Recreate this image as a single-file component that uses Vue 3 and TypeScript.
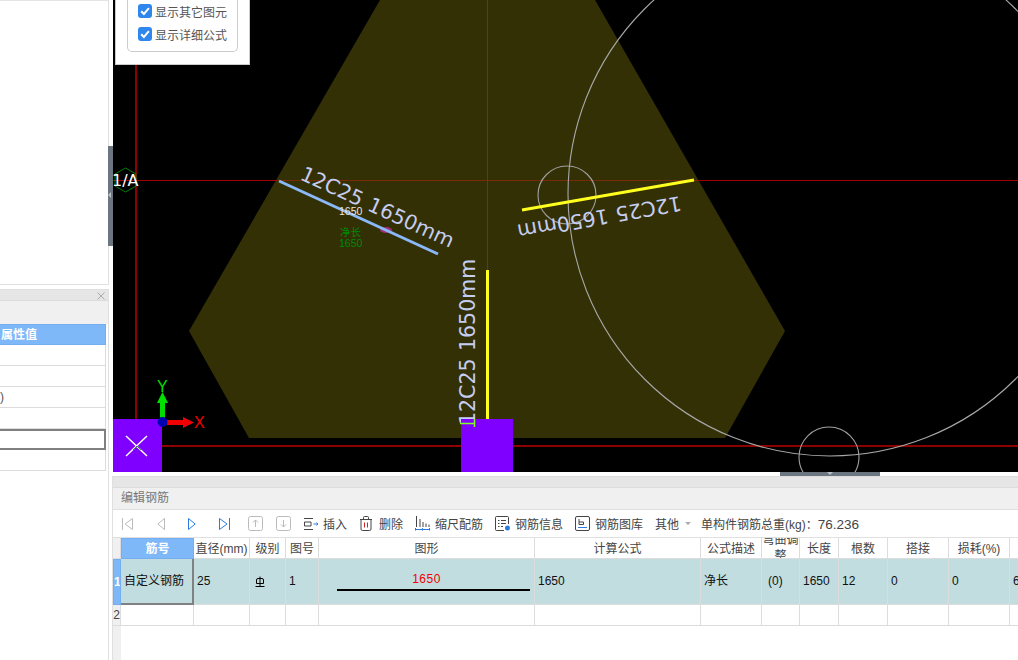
<script setup lang="ts">
interface Column {
  title: string
  width: number
}

const columns: Column[] = [
  { title: '筋号', width: 73 },
  { title: '直径(mm)', width: 56 },
  { title: '级别', width: 36 },
  { title: '图号', width: 33 },
  { title: '图形', width: 216 },
  { title: '计算公式', width: 166 },
  { title: '公式描述', width: 61 },
  { title: '弯曲调整', width: 38 },
  { title: '长度', width: 39 },
  { title: '根数', width: 49 },
  { title: '搭接', width: 61 },
  { title: '损耗(%)', width: 61 },
  { title: '', width: 40 },
]

const gridTemplate = '8px ' + columns.map((c) => c.width + 'px').join(' ')

const rebar = ['自定义钢筋', '25', '', '1', '', '1650', '净长', '(0)', '1650', '12', '0', '0', '6']
const sideRows = ['', '', ')', '', '', '']
const viewOptions = ['显示其它图元', '显示详细公式']
</script>

<template>
  <div class="page">
    <aside class="side">
      <div class="side-top">
        <span class="splitter-v"><i></i></span>
      </div>
      <div class="side-props">
        <div class="props-title">
          <svg class="close" width="8" height="8" viewBox="0 0 8 8" stroke="#aaa">
            <path d="M.5 .5L7.5 7.5M7.5 .5L.5 7.5" />
          </svg>
        </div>
        <div class="props-tabs"></div>
        <div class="props-head">属性值</div>
        <div
          v-for="(text, i) in sideRows"
          :key="i"
          class="props-row"
          :class="{ current: i === 4 }"
        >{{ text }}</div>
      </div>
    </aside>

    <main class="work">
      <div class="canvas">
        <svg class="drawing" viewBox="113 0 905 472" width="905" height="472">
          <rect x="113" y="0" width="905" height="472" fill="#000" />
          <polygon points="380,0 595,0 785,331 725,438 249,438 189,331" fill="#333006" />

          <line x1="136" y1="0" x2="136" y2="420" stroke="#8b0000" stroke-width="2" />
          <line x1="162" y1="446" x2="1018" y2="446" stroke="#8b0000" stroke-width="2" />
          <line x1="113" y1="180.5" x2="278" y2="180.5" stroke="#a00000" />
          <line x1="278" y1="180.5" x2="697" y2="180.5" stroke="#7a2a04" />
          <line x1="697" y1="180.5" x2="1018" y2="180.5" stroke="#a00000" />
          <line x1="487.5" y1="0" x2="487.5" y2="270" stroke="#7a3208" />

          <circle cx="830" cy="194" r="262" fill="none" stroke="#a8a8a8" stroke-width="1.1" />
          <circle cx="567" cy="195" r="29" fill="none" stroke="#a0a0a0" stroke-width="1.1" />
          <circle cx="829" cy="457" r="30" fill="none" stroke="#a0a0a0" stroke-width="1.1" />

          <polygon points="125.5,168 136,174 136,186 125.5,192 115,186 115,174" fill="none" stroke="#008000" />
          <text x="112" y="186" class="axis-name">1/A</text>

          <ellipse cx="386" cy="230" rx="6" ry="3" fill="#a0307a" />
          <line x1="279" y1="181" x2="438" y2="254" stroke="#8ab8f8" stroke-width="3" />
          <line x1="522" y1="210" x2="694" y2="180" stroke="#ffff20" stroke-width="3" />
          <line x1="487.5" y1="270" x2="487.5" y2="420" stroke="#ffff20" stroke-width="3" />

          <text x="299" y="179" class="rebar-label" transform="rotate(24.6 299 179)">12C25 1650mm</text>
          <text x="680" y="196" class="rebar-label" transform="rotate(170 680 196)">12C25 1650mm</text>
          <text x="475" y="425" class="rebar-label" transform="rotate(-90 475 425)">12C25 1650mm</text>

          <text x="339" y="215" class="note white">1650</text>
          <text x="340" y="236" class="note green">净长</text>
          <text x="339" y="247" class="note green">1650</text>

          <rect x="113" y="419" width="49" height="53" fill="#8000ff" />
          <rect x="461" y="419" width="52" height="53" fill="#8000ff" />
          <path d="M460 423.5H475M474.5 419V427" fill="none" stroke="#80ff20" stroke-width="1.5" />
          <path d="M126 436L147 456M147 436L126 456" stroke="#fff" stroke-width="1.5" />
          <path d="M133 450L137 446L141 450" fill="none" stroke="#2f9a2f" />

          <rect x="160" y="402" width="5" height="18" fill="#00e000" />
          <polygon points="162.5,392 168,403 157,403" fill="#00e000" />
          <rect x="167" y="420" width="17" height="5" fill="#f00000" />
          <polygon points="183,417 194,422.5 183,428" fill="#f00000" />
          <circle cx="162.5" cy="422" r="5" fill="#0000b0" />
          <text x="157" y="392" class="axis-letter" fill="#00e000">Y</text>
          <text x="194" y="428" class="axis-letter" fill="#f00000">X</text>
        </svg>

        <div class="view-options">
          <div class="options-box">
            <div v-for="label in viewOptions" :key="label" class="option">
              <svg width="14" height="14" viewBox="0 0 14 14">
                <rect width="14" height="14" rx="3" fill="#2f86ec" />
                <path d="M3.2 7.2L5.9 10L10.9 4.2" fill="none" stroke="#fff" stroke-width="2" />
              </svg>
              {{ label }}
            </div>
          </div>
        </div>
      </div>

      <div class="gap-row"><span class="splitter-h"><i></i></span></div>

      <section class="rebar-panel">
        <div class="panel-strip"></div>
        <div class="panel-title">编辑钢筋</div>

        <div class="toolbar">
          <svg class="ico first" width="11" height="14" viewBox="0 0 11 14" fill="none" stroke="#bbb">
            <path d="M.5 1V13M10.5 1.5L3 7L10.5 12.5Z" />
          </svg>
          <svg class="ico prev" width="8" height="14" viewBox="0 0 8 14" fill="none" stroke="#bbb">
            <path d="M7.5 1.5L.8 7L7.5 12.5Z" />
          </svg>
          <svg class="ico next" width="8" height="14" viewBox="0 0 8 14" fill="none" stroke="#2a7ae0">
            <path d="M.5 1.5L7.2 7L.5 12.5Z" />
          </svg>
          <svg class="ico last" width="11" height="14" viewBox="0 0 11 14" fill="none" stroke="#2a7ae0">
            <path d="M10.5 1V13M.5 1.5L8 7L.5 12.5Z" />
          </svg>
          <svg class="ico up" width="15" height="15" viewBox="0 0 15 15" fill="none" stroke="#bbb">
            <rect x=".5" y=".5" width="14" height="14" rx="2" />
            <path d="M7.5 11V4M5 6.5L7.5 4L10 6.5" />
          </svg>
          <svg class="ico down" width="15" height="15" viewBox="0 0 15 15" fill="none" stroke="#bbb">
            <rect x=".5" y=".5" width="14" height="14" rx="2" />
            <path d="M7.5 4V11M5 8.5L7.5 11L10 8.5" />
          </svg>

          <button class="tool insert">
            <svg width="16" height="14" viewBox="0 0 16 14" fill="none" stroke="#444">
              <path d="M1 1.5H10M1 12.5H10M1.5 5H8V9H1.5Z" />
              <path d="M10.5 7H15M13.5 5.5L15 7L13.5 8.5" stroke="#2a7ae0" />
            </svg>
            插入
          </button>
          <button class="tool del">
            <svg width="14" height="15" viewBox="0 0 14 15" fill="none" stroke="#444">
              <path d="M1 3.5H13M4.5 3.5V1.5A1 1 0 0 1 5.5 .5H8.5A1 1 0 0 1 9.5 1.5V3.5M2 3.5V13A1.5 1.5 0 0 0 3.5 14.5H10.5A1.5 1.5 0 0 0 12 13V3.5" />
              <path d="M5.5 6.5V11.5M8.5 6.5V11.5" stroke="#d02020" />
            </svg>
            删除
          </button>
          <button class="tool ruler">
            <svg width="15" height="15" viewBox="0 0 15 15" fill="none" stroke="#444">
              <path d="M1.5 0V11M5 3V11M8 6V11M11 7.5V11M14 8.5V11" />
              <path d="M.5 12V14.5M.5 13.5H14.5M14.5 12V14.5M7.5 12V14.5" stroke="#2a7ae0" />
            </svg>
            缩尺配筋
          </button>
          <button class="tool info">
            <svg width="16" height="15" viewBox="0 0 16 15" fill="none" stroke="#444">
              <path d="M9 14.5H1.5A1 1 0 0 1 .5 13.5V1.5A1 1 0 0 1 1.5 .5H12.5A1 1 0 0 1 13.5 1.5V8" />
              <path d="M3 4.5H4.5M6 4.5H11M3 7.5H4.5M6 7.5H11M3 10.5H4.5M6 10.5H8" />
              <circle cx="12.5" cy="12" r="2.5" fill="#2a7ae0" stroke="none" />
            </svg>
            钢筋信息
          </button>
          <button class="tool lib">
            <svg width="15" height="15" viewBox="0 0 15 15" fill="none" stroke="#444">
              <rect x=".5" y=".5" width="14" height="14" rx="1.5" />
              <path d="M4 3V8.5H8.5V6H4" />
              <path d="M3 11.5H12" stroke="#2a7ae0" />
            </svg>
            钢筋图库
          </button>
          <span class="more">其他</span>
          <span class="caret"></span>
          <span class="total">单构件钢筋总重(kg)：<b>76.236</b></span>
        </div>

        <div class="grid" :style="{ gridTemplateColumns: gridTemplate }">
          <div class="corner"></div>
          <div
            v-for="(col, i) in columns"
            :key="'h' + i"
            class="head"
            :class="{ active: i === 0, wrap: col.title === '弯曲调整' }"
          >{{ col.title }}</div>

          <div class="row-no active">1</div>
          <div
            v-for="(text, i) in rebar"
            :key="'r' + i"
            class="cell"
            :class="{ selected: i === 0, shape: i === 4, bend: i === 7 }"
          >
            <template v-if="i === 2">
              <svg class="grade" width="10" height="11" viewBox="0 0 10 11" fill="none" stroke="#000">
                <path d="M1.5 4Q1.5 2.5 3 2.5H7Q8.5 2.5 8.5 4V7.5H1.5ZM5 .5V10M.5 10.5H9.5" />
              </svg>
            </template>
            <template v-else-if="i === 4">
              <span class="shape-dim">1650</span>
              <span class="shape-bar"></span>
            </template>
            <template v-else>{{ text }}</template>
          </div>

          <div class="row-no">2</div>
          <div v-for="(col, i) in columns" :key="'e' + i" class="cell empty"></div>
        </div>
        <div class="no-rest"></div>
      </section>
    </main>
  </div>
</template>

<style>
html,
body {
  margin: 0;
  background: #fff;
  overflow: hidden;
}
</style>

<style scoped>
.page {
  display: flex;
  width: 1018px;
  height: 660px;
  overflow: hidden;
  background: #fff;
  font-family: "Liberation Sans", "Noto Sans CJK SC", sans-serif;
  font-size: 12px;
  color: #333;
}

.side {
  width: 113px;
  flex: none;
  display: flex;
  flex-direction: column;
  gap: 4px;
}
.side-top {
  height: 285px;
  box-sizing: border-box;
  width: 109px;
  border-top: 1px solid #e4e4e4;
  border-right: 1px solid #e0e0e0;
  border-bottom: 1px solid #e0e0e0;
  position: relative;
}
.splitter-v {
  position: absolute;
  left: 108px;
  top: 145px;
  width: 5px;
  height: 100px;
  background: #6c7680;
}
.splitter-v i {
  position: absolute;
  left: 0;
  top: 46px;
  border: 3px solid transparent;
  border-right-color: #b8bec4;
  border-left-width: 0;
}
.side-props {
  flex: 1;
  width: 109px;
  box-sizing: border-box;
  border-right: 1px solid #e0e0e0;
  overflow: hidden;
}
.props-title {
  height: 10px;
  background: #e6e6e6;
  border-top: 1px solid #e0e0e0;
  border-bottom: 1px solid #dcdcdc;
  position: relative;
}
.close {
  position: absolute;
  right: 3px;
  top: 2px;
}
.props-tabs {
  height: 23px;
  background: #f0f0f0;
}
.props-head,
.props-row {
  width: 106px;
  box-sizing: border-box;
  height: 21px;
  line-height: 20px;
  border-right: 1px solid #dcdcdc;
  border-bottom: 1px solid #dcdcdc;
}
.props-head {
  background: #7fb8f8;
  border: 1px solid #74aef0;
  border-left: 0;
  color: #fff;
  font-weight: 700;
  font-size: 12px;
  padding-left: 1px;
}
.props-row {
  font-size: 12px;
  color: #555;
}
.props-row.current {
  border: 2px solid #808080;
  border-left: 0;
}

.work {
  flex: 1;
  min-width: 0;
  display: flex;
  flex-direction: column;
}
.canvas {
  position: relative;
  height: 472px;
  flex: none;
}
.drawing {
  display: block;
}
.rebar-label {
  font-family: "DejaVu Sans", sans-serif;
  font-size: 20.5px;
  fill: #c5cdf0;
  word-spacing: 1px;
}
.axis-name {
  font-family: "DejaVu Sans", sans-serif;
  font-size: 16px;
  fill: #fff;
}
.axis-letter {
  font-family: "Liberation Sans", sans-serif;
  font-size: 16px;
}
.note {
  font-family: "Liberation Sans", "Noto Sans CJK SC", sans-serif;
  font-size: 10.5px;
}
.note.white {
  fill: #e8e8e0;
}
.note.green {
  fill: #008a00;
}

.view-options {
  position: absolute;
  left: 2px;
  top: 0;
  width: 135px;
  height: 65px;
  box-sizing: border-box;
  background: #fff;
  border-right: 1px solid #ccc;
  border-bottom: 1px solid #ccc;
  border-left: 1px solid #ccc;
  padding-right: 11px;
  padding-left: 11px;
}
.options-box {
  height: 52px;
  box-sizing: border-box;
  border: 1px solid #ccc;
  border-top: 0;
  border-radius: 0 0 5px 5px;
  padding: 4px 0 0 10px;
  display: flex;
  flex-direction: column;
  gap: 9px;
}
.option {
  display: flex;
  align-items: center;
  gap: 3px;
  height: 14px;
  font-size: 12px;
  color: #555;
  white-space: nowrap;
}
.option svg {
  flex: none;
}

.gap-row {
  height: 4px;
  flex: none;
  position: relative;
}
.splitter-h {
  position: absolute;
  left: 667px;
  top: 0;
  width: 100px;
  height: 4px;
  background: #6c7680;
}
.splitter-h i {
  position: absolute;
  left: 47px;
  top: 0;
  border: 3px solid transparent;
  border-top-color: #b8bec4;
  border-bottom-width: 0;
}

.rebar-panel {
  flex: 1;
  display: flex;
  flex-direction: column;
  min-height: 0;
  border-left: 1px solid #e0e0e0;
  margin-left: -1px;
}
.panel-strip {
  height: 10px;
  background: #e6e6e6;
  border-top: 1px solid #dcdcdc;
  border-bottom: 1px solid #dcdcdc;
  flex: none;
}
.panel-title {
  height: 21px;
  line-height: 21px;
  padding-left: 8px;
  background: #f0f0f0;
  border-bottom: 1px solid #e0e0e0;
  color: #777;
  font-size: 12px;
  flex: none;
}

.toolbar {
  height: 27px;
  flex: none;
  display: flex;
  align-items: center;
  border-bottom: 1px solid #e0e0e0;
  white-space: nowrap;
  color: #444;
}
.ico {
  flex: none;
}
.first { margin-left: 9px; }
.prev { margin-left: 24px; }
.next { margin-left: 23px; }
.last { margin-left: 23px; }
.up { margin-left: 18px; }
.down { margin-left: 13px; }
.tool {
  display: flex;
  align-items: center;
  gap: 5px;
  padding: 0;
  border: 0;
  background: none;
  font: inherit;
  color: #444;
}
.insert { margin-left: 12px; gap: 4px; }
.del { margin-left: 12px; gap: 6px; }
.ruler { margin-left: 12px; }
.info { margin-left: 12px; gap: 4px; }
.lib { margin-left: 12px; }
.more { margin-left: 12px; }
.caret {
  width: 0;
  height: 0;
  margin-left: 6px;
  margin-right: 10px;
  border: 3px solid transparent;
  border-top: 3px solid #aaa;
  border-bottom-width: 0;
}
.total b {
  font-weight: 400;
  font-size: 13.5px;
}

.grid {
  display: grid;
  grid-template-rows: 21px 46px 21px;
  flex: none;
}
.corner {
  background: #f0f0f0;
  border-bottom: 1px solid #dcdcdc;
  border-right: 1px solid #dcdcdc;
}
.head,
.cell,
.row-no {
  box-sizing: border-box;
  border-right: 1px solid #dcdcdc;
  border-bottom: 1px solid #dcdcdc;
  overflow: hidden;
  white-space: nowrap;
}
.head {
  text-align: center;
  line-height: 23px;
  color: #444;
}
.head.active {
  background: #7fb8f8;
  border: 1px solid #74aef0;
  color: #fff;
  font-weight: 700;
  line-height: 21px;
}
.head.wrap {
  white-space: normal;
  line-height: 16px;
  display: flex;
  flex-direction: column;
  justify-content: center;
}
.row-no {
  background: #f0f0f0;
  font-size: 12px;
  text-align: center;
  line-height: 45px;
  color: #444;
}
.row-no.active {
  background: #7fb8f8;
  border: 1px solid #74aef0;
  color: #fff;
  font-weight: 700;
}
.row-no:not(.active) {
  line-height: 20px;
}
.no-rest {
  flex: 1;
  width: 8px;
  background: #f0f0f0;
}
.cell {
  background: #c1dde0;
  padding-left: 3px;
  line-height: 44px;
  color: #111;
}
.cell.selected {
  border-right: 2px solid #808080;
  border-bottom: 2px solid #808080;
  font-size: 12px;
}
.cell.bend {
  padding-left: 6px;
}
.cell.shape {
  position: relative;
  padding: 0;
}
.cell.empty {
  background: #fff;
}
.grade {
  margin-left: 2px;
  vertical-align: middle;
}
.shape-dim {
  position: absolute;
  left: 0;
  right: 0;
  top: 13px;
  text-align: center;
  line-height: 14px;
  letter-spacing: 0.5px;
  color: #f00000;
}
.shape-bar {
  position: absolute;
  left: 18px;
  right: 4px;
  top: 30px;
  height: 2px;
  background: #000;
}
</style>
